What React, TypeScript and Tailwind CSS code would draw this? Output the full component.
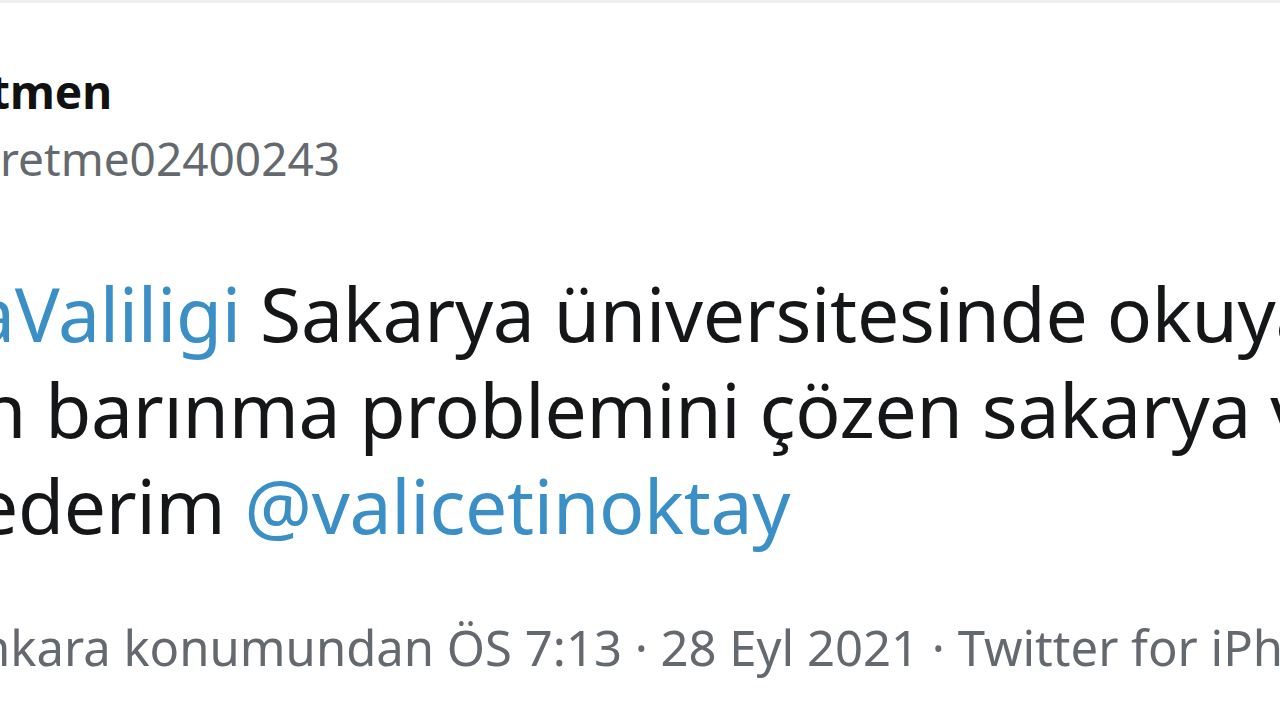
export default function App() {
  return (
    <div
      className="w-[1280px] h-[720px] overflow-hidden bg-white text-[#141618]"
      style={{ fontFamily: '"Noto Sans", "Open Sans", sans-serif' }}
    >
      <div className="h-[3px] bg-[#efefef]" />
      <div className="pt-[60px]">
        <div className="whitespace-nowrap text-[46px] leading-[56px] font-bold ml-[-10px] text-[#111]">tmen</div>
        <div className="whitespace-nowrap text-[46px] leading-[56px] text-[#63696e] mt-[11px] ml-0">
          retme02400243
        </div>
      </div>
      <div className="mt-[79px] text-[75px] leading-[96px] tracking-[-0.3px]">
        <div className="whitespace-nowrap ml-[-27px]">
          <span className="text-[#3a8fc6]">aValiligi</span> Sakarya üniversitesinde okuyan
        </div>
        <div className="whitespace-nowrap ml-[-20px]">n barınma problemini çözen sakarya valimize</div>
        <div className="whitespace-nowrap ml-[-24px]">
          ederim <span className="text-[#3a8fc6]">@valicetinoktay</span>
        </div>
      </div>
      <div className="mt-[64px] whitespace-nowrap text-[49px] leading-[60px] text-[#63696e] ml-[-20px]">
        nkara konumundan ÖS 7:13 · 28 Eyl 2021 · Twitter for iPhone
      </div>
    </div>
  )
}
